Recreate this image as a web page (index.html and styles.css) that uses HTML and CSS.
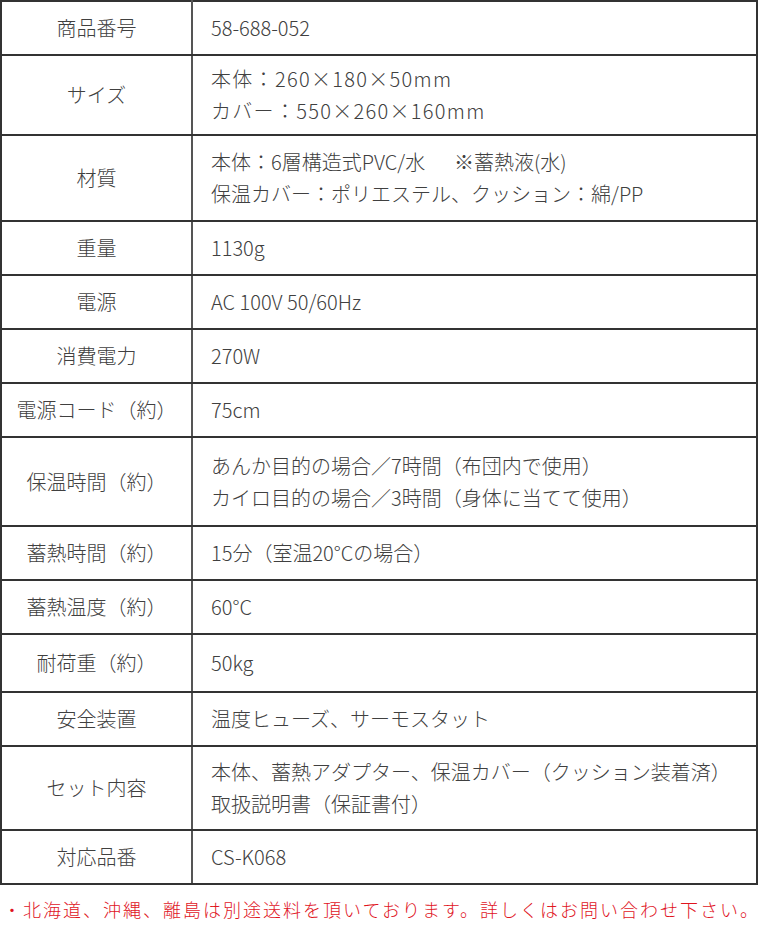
FILE: index.html
```html
<!DOCTYPE html>
<html lang="ja">
<head>
<meta charset="utf-8">
<title>仕様</title>
<link rel="stylesheet" href="styles.css">
</head>
<body>
<table class="spec">
  <tbody>
    <tr><th>商品番号</th><td>58-688-052</td></tr>
    <tr class="compact"><th>サイズ</th><td class="wide">本体：260×180×50mm<br>カバー：550×260×160mm</td></tr>
    <tr><th>材質</th><td>本体：6層構造式PVC/水　&nbsp;&nbsp;※蓄熱液(水)<br>保温カバー：ポリエステル、クッション：綿/PP</td></tr>
    <tr><th>重量</th><td>1130g</td></tr>
    <tr><th>電源</th><td>AC 100V 50/60Hz</td></tr>
    <tr><th>消費電力</th><td>270W</td></tr>
    <tr><th>電源コード（約）</th><td>75cm</td></tr>
    <tr class="roomy"><th>保温時間（約）</th><td>あんか目的の場合／7時間（布団内で使用）<br>カイロ目的の場合／3時間（身体に当てて使用）</td></tr>
    <tr><th>蓄熱時間（約）</th><td>15分（室温20°Cの場合）</td></tr>
    <tr><th>蓄熱温度（約）</th><td>60°C</td></tr>
    <tr class="tall"><th>耐荷重（約）</th><td>50kg</td></tr>
    <tr><th>安全装置</th><td>温度ヒューズ、サーモスタット</td></tr>
    <tr class="snug"><th>セット内容</th><td>本体、蓄熱アダプター、保温カバー（クッション装着済）<br>取扱説明書（保証書付）</td></tr>
    <tr><th>対応品番</th><td>CS-K068</td></tr>
  </tbody>
</table>
<p class="note">・北海道、沖縄、離島は別途送料を頂いております。詳しくはお問い合わせ下さい。</p>
</body>
</html>
```
FILE: styles.css
```css
html, body {
  margin: 0;
  padding: 0;
  background: #fff;
}

body {
  font-family: "Noto Sans CJK JP", "Noto Sans", sans-serif;
  color: #404040;
  width: 760px;
}

.spec {
  width: 758px;
  border-collapse: collapse;
  border: 2px solid #333;
  font-size: 20px;
  font-weight: 300;
  line-height: 32px;
}

.spec th,
.spec td {
  border: 2px solid #333;
  padding: 10px 0;
  vertical-align: middle;
}

.spec tr.compact th,
.spec tr.compact td {
  padding-top: 7px;
  padding-bottom: 7px;
}

.spec tr.snug th,
.spec tr.snug td {
  padding-top: 9px;
  padding-bottom: 9px;
}

.spec tr.roomy th,
.spec tr.roomy td {
  padding-top: 11.5px;
  padding-bottom: 11.5px;
}

.spec tr.tall th,
.spec tr.tall td {
  padding-top: 12px;
  padding-bottom: 12px;
}

.spec th {
  width: 189px;
  font-weight: 300;
  text-align: center;
  border-right-color: #555;
}

.spec td {
  text-align: left;
  padding-left: 18px;
  border-left-color: #555;
}

.spec td.wide {
  letter-spacing: 1.3px;
}

.note {
  margin: 12px 0 0 0;
  padding-left: 3px;
  color: #e0141e;
  font-size: 18px;
  font-weight: 300;
  letter-spacing: 2px;
  line-height: 24px;
  white-space: nowrap;
}
```
